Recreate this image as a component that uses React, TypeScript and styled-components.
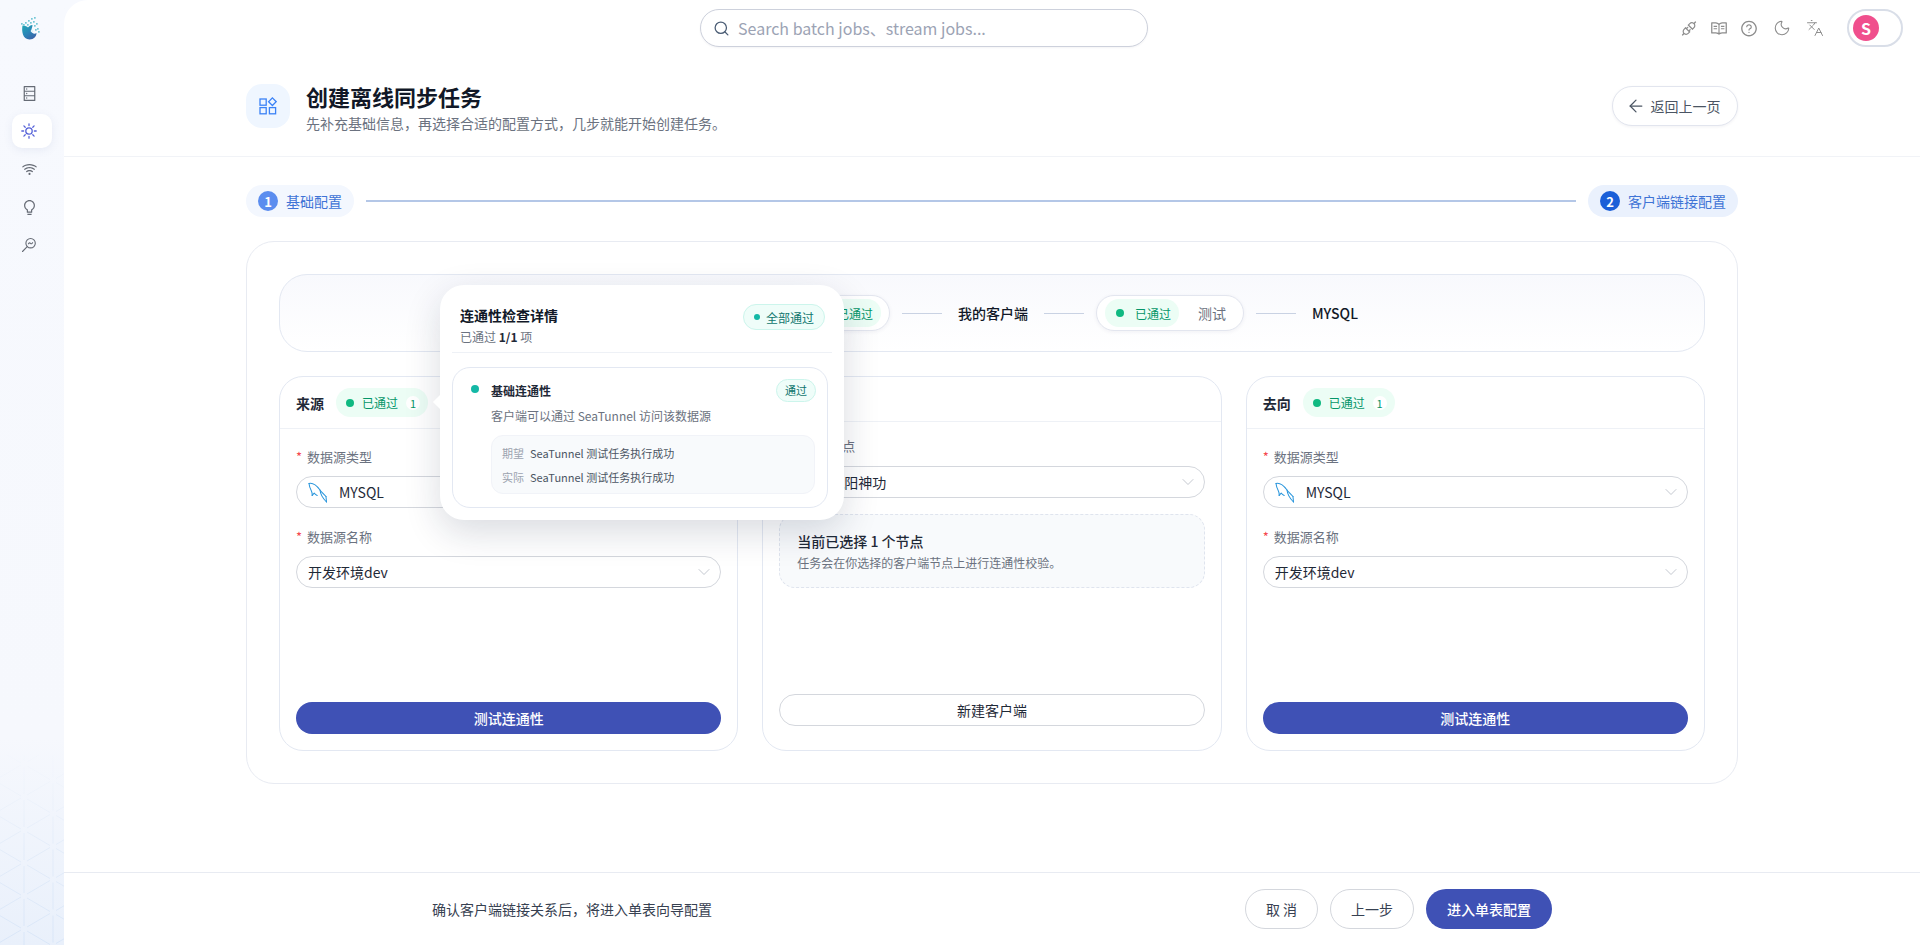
import React from "react";
import styled, { createGlobalStyle } from "styled-components";
import { ArrowLeft, ChevronDown, Languages, Moon, Search } from "lucide-react";
import {
  AiOutlineApi,
  AiOutlineBulb,
  AiOutlineDatabase,
  AiOutlineQuestionCircle,
  AiOutlineRead,
  AiOutlineWifi,
} from "react-icons/ai";

const GlobalStyle = createGlobalStyle`
  html, body { margin: 0; padding: 0; height: 100%; background: #fff; }
  body { font-family: "Noto Sans CJK SC", "Noto Sans", sans-serif; color: #111827; overflow: hidden; }
  #root { height: 100%; }
  * { box-sizing: border-box; }
`;

const Shell = styled.div`
  display: flex;
  height: 945px;
  background: linear-gradient(180deg, #f7f9fe 0%, #f6f8fd 78%, #e9f0fb 100%);
`;

const Sidebar = styled.aside`
  position: relative;
  width: 64px;
  flex: none;
  display: flex;
  flex-direction: column;
  align-items: center;
  overflow: hidden;
`;

const LogoSlot = styled.div`
  height: 74px;
  padding-top: 16px;
  margin-left: -6px;
`;

const NavList = styled.nav`
  position: relative;
  display: flex;
  flex-direction: column;
  gap: 4px;
  margin-top: 2px;
`;

const NavTile = styled.div<{ $active?: boolean }>`
  width: 40px;
  height: 34px;
  display: flex;
  align-items: center;
  justify-content: center;
  padding-right: 6px;
  border-radius: 10px;
  color: ${(p) => (p.$active ? "#5662d8" : "#666b75")};
  background: ${(p) => (p.$active ? "#fff" : "transparent")};
  box-shadow: ${(p) => (p.$active ? "0 2px 8px rgba(90,110,170,.10)" : "none")};
`;

const Lattice = styled.svg`
  position: absolute;
  left: 0;
  bottom: 0;
`;

const Main = styled.main`
  flex: 1;
  min-width: 0;
  display: flex;
  flex-direction: column;
  background: #fff;
  border-top-left-radius: 24px;
`;

const Topbar = styled.header`
  height: 56px;
  flex: none;
  display: flex;
  align-items: center;
  padding: 0 17px 0 636px;
`;

const SearchBox = styled.div`
  width: 448px;
  height: 38px;
  display: flex;
  align-items: center;
  gap: 8px;
  padding: 0 12px;
  border: 1px solid #cdd1dc;
  border-radius: 19px;
  background: #fff;
  box-shadow: 0 1px 2px rgba(30, 40, 80, 0.05);
  color: #4b5d75;
`;

const SearchHint = styled.span`
  font-size: 16px;
  color: #9ca3b4;
`;

const TopIcons = styled.div`
  margin-left: auto;
  display: flex;
  align-items: center;
  gap: 12px;
  color: #8c8c8c;
`;

const TopIcon = styled.span<{ $wide?: boolean }>`
  width: 18px;
  height: 18px;
  margin-left: ${(p) => (p.$wide ? 3 : 0)}px;
  display: flex;
  align-items: center;
  justify-content: center;
`;

const AvatarShell = styled.div`
  width: 56px;
  height: 38px;
  margin-left: 11px;
  padding: 4px;
  border: 2px solid #d9dee8;
  border-radius: 19px;
  background: #fff;
`;

const Avatar = styled.div`
  width: 26px;
  height: 26px;
  border-radius: 50%;
  background: #f04f8d;
  color: #fff;
  font-size: 16px;
  font-weight: 700;
  display: flex;
  align-items: center;
  justify-content: center;
`;

const PageHead = styled.section`
  height: 101px;
  flex: none;
  display: flex;
  align-items: center;
  gap: 16px;
  padding: 0 182px;
  border-bottom: 1px solid #f1f3f7;
`;

const HeadBadge = styled.div`
  width: 44px;
  height: 44px;
  flex: none;
  border-radius: 16px;
  background: #eff6ff;
  color: #3b82f6;
  display: flex;
  align-items: center;
  justify-content: center;
`;

const HeadText = styled.div`
  flex: 1;
  display: flex;
  flex-direction: column;
  gap: 1px;
`;

const PageTitle = styled.h1`
  margin: 0;
  font-size: 22px;
  line-height: 32px;
  font-weight: 700;
  color: #111827;
`;

const PageSub = styled.p`
  margin: 0;
  font-size: 14px;
  line-height: 20px;
  color: #6b7280;
`;

const BackButton = styled.button`
  width: 126px;
  height: 40px;
  display: flex;
  align-items: center;
  justify-content: center;
  gap: 5px;
  padding: 0 4px 0 0;
  border: 1px solid #e2e5ee;
  border-radius: 20px;
  background: #fff;
  box-shadow: 0 1px 3px rgba(30, 40, 80, 0.06);
  color: #4b5563;
  font: inherit;
  font-size: 14px;
`;

const Content = styled.div`
  flex: 1;
  min-height: 0;
  padding: 28px 182px 0;
`;

const Steps = styled.div`
  display: flex;
  align-items: center;
  gap: 12px;
  height: 32px;
`;

const StepPill = styled.div<{ $current?: boolean }>`
  height: 32px;
  display: flex;
  align-items: center;
  gap: 8px;
  padding: 0 12px;
  border-radius: 16px;
  background: ${(p) => (p.$current ? "#eaf1fd" : "#f3f7fe")};
  color: #3f74d6;
  font-size: 14px;
`;

const StepNumber = styled.span<{ $current?: boolean }>`
  width: 20px;
  height: 20px;
  border-radius: 50%;
  background: ${(p) => (p.$current ? "#1a5fd8" : "#5b8def")};
  color: #fff;
  font-size: 13px;
  font-weight: 700;
  display: flex;
  align-items: center;
  justify-content: center;
`;

const StepLine = styled.div`
  flex: 1;
  height: 2px;
  background: #b4c7e7;
`;

const Card = styled.section`
  margin-top: 24px;
  padding: 32px;
  border: 1px solid #e8ebf2;
  border-radius: 28px;
  background: #fff;
`;

const Banner = styled.div`
  height: 78px;
  display: flex;
  align-items: center;
  justify-content: center;
  gap: 12px;
  padding-left: 2px;
  border: 1px solid #e3e8f2;
  border-radius: 28px;
  background: linear-gradient(180deg, #f8f9fd 0%, #ffffff 100%);
`;

const BannerNode = styled.span`
  padding: 0 4px;
  font-size: 14px;
  font-weight: 500;
  color: #111827;
`;

const BannerLine = styled.span`
  width: 40px;
  height: 1px;
  background: #c9d2e3;
`;

const ConnPill = styled.div`
  width: 148px;
  height: 36px;
  display: flex;
  align-items: center;
  justify-content: space-between;
  padding: 0 8px;
  border: 1px solid #e3e6ef;
  border-radius: 18px;
  background: #fff;
  box-shadow: 0 1px 4px rgba(30, 40, 80, 0.06);
`;

const ConnName = styled.span<{ $shift?: boolean }>`
  flex: 1;
  text-align: center;
  padding-left: ${(p) => (p.$shift ? 10 : 0)}px;
  font-size: 14px;
  color: #6b7280;
`;

const ConnPass = styled.span`
  width: 74px;
  height: 28px;
  flex: none;
  display: flex;
  align-items: center;
  gap: 11px;
  padding: 0 0 0 11px;
  border-radius: 14px;
  background: #ecfdf5;
  color: #059669;
  font-size: 12px;
  white-space: nowrap;
`;

const StatusDot = styled.i<{ $size?: number; $color?: string }>`
  width: ${(p) => p.$size ?? 8}px;
  height: ${(p) => p.$size ?? 8}px;
  flex: none;
  border-radius: 50%;
  background: ${(p) => p.$color ?? "#10b981"};
`;

const Panels = styled.div`
  position: relative;
  margin-top: 24px;
  height: 375px;
  display: grid;
  grid-template-columns: repeat(3, 1fr);
  gap: 24px;
`;

const Panel = styled.div`
  display: flex;
  flex-direction: column;
  min-width: 0;
  border: 1px solid #e3e8f2;
  border-radius: 24px;
  background: #fff;
`;

const PanelHead = styled.div<{ $tall?: boolean }>`
  height: ${(p) => (p.$tall ? 52 : 45)}px;
  flex: none;
  display: flex;
  align-items: center;
  gap: 12px;
  padding: 0 16px;
  border-bottom: 1px solid #eef1f6;
`;

const PanelName = styled.span`
  font-size: 14px;
  font-weight: 700;
  color: #1f2937;
`;

const PassBadge = styled.span`
  width: 92px;
  height: 29px;
  display: flex;
  align-items: center;
  padding: 0 0 0 10px;
  border-radius: 15px;
  background: #ecfdf5;
  color: #059669;
  font-size: 12px;
  white-space: nowrap;
`;

const PassText = styled.span`
  margin-left: 8px;
`;

const PassCount = styled.span`
  width: 14px;
  height: 14px;
  margin-left: 8px;
  border-radius: 50%;
  background: #fff;
  font-size: 11px;
  display: flex;
  align-items: center;
  justify-content: center;
`;

const PanelBody = styled.div<{ $compact?: boolean }>`
  flex: 1;
  min-height: 0;
  display: flex;
  flex-direction: column;
  padding: ${(p) => (p.$compact ? "12px 16px 24px" : "16px 16px 16px")};
`;

const FieldLabel = styled.label<{ $spaced?: boolean; $after?: number }>`
  display: flex;
  align-items: center;
  gap: 4px;
  height: 22px;
  margin-top: ${(p) => (p.$spaced ? 17 : 0)}px;
  margin-bottom: ${(p) => p.$after ?? 9}px;
  font-size: 13px;
  color: #6b7280;
`;

const Star = styled.span`
  width: 7px;
  color: #f5484f;
  font-size: 13px;
`;

const SelectBox = styled.div<{ $inset?: number }>`
  height: 32px;
  flex: none;
  display: flex;
  align-items: center;
  padding: 0 6px 0 ${(p) => p.$inset ?? 11}px;
  border: 1px solid #d4d7dd;
  border-radius: 16px;
  background: #fff;
  color: #1f2937;
  font-size: 14px;
`;

const SelectValue = styled.span`
  flex: 1;
`;

const SelectChevron = styled(ChevronDown).attrs({ size: 20, strokeWidth: 1 })`
  color: #b8bdc6;
`;

const DolphinSlot = styled.span`
  display: flex;
  margin-right: 11px;
`;

const Spacer = styled.div`
  flex: 1;
`;

const PrimaryButton = styled.button`
  height: 32px;
  flex: none;
  border: 0;
  border-radius: 16px;
  background: #3f51b5;
  color: #fff;
  font: inherit;
  font-size: 14px;
  font-weight: 500;
`;

const OutlineButton = styled.button`
  height: 32px;
  flex: none;
  border: 1px solid #d4d7dd;
  border-radius: 16px;
  background: #fff;
  color: #1f2937;
  font: inherit;
  font-size: 14px;
`;

const InfoBox = styled.div`
  height: 74px;
  margin-top: 16px;
  padding: 15px 17px;
  border: 1px dashed #dfe4ee;
  border-radius: 16px;
  background: #f8fafc;
`;

const InfoTitle = styled.div`
  font-size: 14px;
  line-height: 22px;
  font-weight: 500;
  color: #1f2937;
`;

const InfoDesc = styled.div`
  margin-top: 1px;
  font-size: 12px;
  line-height: 20px;
  color: #6b7280;
`;

const Popover = styled.div`
  position: absolute;
  left: 161px;
  top: -91px;
  width: 404px;
  height: 235px;
  padding: 12px;
  border-radius: 24px;
  background: #fff;
  box-shadow: 0 12px 36px rgba(20, 30, 60, 0.16);
  z-index: 5;

  &::before {
    content: "";
    position: absolute;
    left: -5px;
    top: 112px;
    width: 10px;
    height: 10px;
    background: #fff;
    transform: rotate(45deg);
  }
`;

const PopHead = styled.div`
  height: 56px;
  display: flex;
  justify-content: space-between;
  padding: 7px 8px 0;
  border-bottom: 1px solid #eef1f6;
`;

const PopTitle = styled.div`
  font-size: 14px;
  line-height: 22px;
  font-weight: 700;
  color: #111827;
`;

const PopSub = styled.div`
  font-size: 12px;
  line-height: 20px;
  margin-top: 1px;
  color: #6b7280;

  & b {
    color: #1f2937;
  }
`;

const AllPass = styled.span`
  height: 26px;
  margin-right: -1px;
  display: flex;
  align-items: center;
  gap: 6px;
  padding: 0 10px;
  border: 1px solid #ccf5ec;
  border-radius: 13px;
  background: #effdf9;
  color: #0f766e;
  font-size: 12px;
`;

const CheckCard = styled.div`
  position: relative;
  margin-top: 14px;
  height: 141px;
  width: 376px;
  padding: 10px 12px 0 38px;
  border: 1px solid #e3e8f2;
  border-radius: 18px;
`;

const CheckDot = styled(StatusDot)`
  position: absolute;
  left: 18px;
  top: 17px;
`;

const CheckTop = styled.div`
  display: flex;
  align-items: center;
  justify-content: space-between;
  height: 24px;
  margin-right: -1px;
`;

const CheckName = styled.span`
  font-size: 12px;
  font-weight: 700;
  color: #1f2937;
`;

const PassTag = styled.span`
  width: 40px;
  height: 23px;
  display: flex;
  align-items: center;
  justify-content: center;
  border: 1px solid #ccf5ec;
  border-radius: 12px;
  background: #effdf9;
  color: #0f766e;
  font-size: 11px;
`;

const CheckDesc = styled.div`
  margin-top: 4px;
  font-size: 12px;
  line-height: 20px;
  color: #6b7280;
`;

const CheckDetail = styled.div`
  margin-top: 9px;
  height: 59px;
  padding: 5px 10px;
  border: 1px solid #f1f3f8;
  border-radius: 12px;
  background: #f8fafc;
`;

const DetailRow = styled.div`
  display: flex;
  gap: 6px;
  height: 24px;
  align-items: center;
  font-size: 11px;
  color: #4b5563;
`;

const DetailKey = styled.span`
  color: #9ca3af;
`;

const Footer = styled.footer`
  height: 73px;
  flex: none;
  display: flex;
  align-items: center;
  justify-content: space-between;
  padding: 0 368px;
  border-top: 1px solid #e8ebf2;
`;

const FooterNote = styled.span`
  font-size: 14px;
  color: #374151;
`;

const FooterActions = styled.div`
  display: flex;
  gap: 12px;
`;

const FooterButton = styled.button<{ $w: number; $primary?: boolean }>`
  width: ${(p) => p.$w}px;
  height: 40px;
  padding: 0;
  border: ${(p) => (p.$primary ? "0" : "1px solid #d4d7dd")};
  border-radius: 20px;
  background: ${(p) => (p.$primary ? "#3f51b5" : "#fff")};
  color: ${(p) => (p.$primary ? "#fff" : "#374151")};
  font: inherit;
  font-size: 14px;
  font-weight: ${(p) => (p.$primary ? 500 : 400)};
`;

const Logo = () => (
  <svg width="22" height="24" viewBox="0 0 22 24">
    <defs>
      <linearGradient id="lg" x1="0" y1="0" x2="0.7" y2="1">
        <stop offset="0" stopColor="#1fa8b4" />
        <stop offset="0.55" stopColor="#2a86b8" />
        <stop offset="1" stopColor="#3a63a8" />
      </linearGradient>
    </defs>
    <path d="M4.5 9.5C3.5 15 4.5 23.5 11.5 23.5c4.5 0 7-3 7-6.5-2 1.5-4.5.5-5-1.5-.5-2.5 1-4 1-6.5-2.5 0-3.5 1.5-4.5 2.5-1-1-2.5-2-5.500-2z" fill="url(#lg)" />
    <circle cx="14" cy="15" r="1.3" fill="#dff1f8" />
    {[[3,7],[5,8],[7,6],[9,8],[10,4],[12,6],[13,2],[15,5],[16,1],[16,9],[18,7],[19,12],[17,13],[20,15]].map(([x,y]) => (
      <rect key={`${x}-${y}`} x={x} y={y} width="1.7" height="1.7" fill="#74c8d6" />
    ))}
  </svg>
);

const SunDots = () => (
  <svg width="16" height="16" viewBox="0 0 16 16" fill="none" stroke="currentColor" strokeWidth="1.3" strokeLinecap="round">
    <circle cx="8" cy="8" r="3.2" />
    <path d="M8 .8v1.800M8 13.400v1.800M.8 8h1.800M13.400 8h1.800M2.900 2.900l1.300 1.300M11.800 11.800l1.300 1.300M2.900 13.100l1.300-1.300M11.800 4.200l1.300-1.300" />
  </svg>
);

const ProbeIcon = () => (
  <svg width="16" height="16" viewBox="0 0 16 16" fill="none" stroke="currentColor" strokeWidth="1.1" strokeLinecap="round">
    <circle cx="9.6" cy="6.2" r="4.7" />
    <path d="M6.200 9.600 1.500 14.500" />
    <path d="M7.400 6.800c.7-1.200 1.400-1.200 2.100-.5s1.400.6 2.100-.6" />
  </svg>
);

const AppsDiamond = () => (
  <svg width="18" height="18" viewBox="0 0 18 18" fill="none" stroke="currentColor" strokeWidth="1.3">
    <rect x="1" y="2" width="6.2" height="6.2" />
    <rect x="1" y="10.6" width="6.2" height="6.2" />
    <rect x="10.4" y="10.6" width="6.2" height="6.2" />
    <path d="M13.400 .9 17.200 4.700 13.400 8.500 9.600 4.700Z" />
  </svg>
);

const Dolphin = () => (
  <svg width="20" height="21" viewBox="0 0 20 21" fill="none" stroke="#2a96dc" strokeWidth="1.05" strokeLinecap="round" strokeLinejoin="round">
    <path d="M1 1.500C5 .5 9 4 12 8c1.500 2 3.500 4 6 6.500" />
    <path d="M1 1.500c.3 3 1 5 2.400 7.500.6 1.200 1 3 .8 4.500" />
    <path d="M4.200 13.500c.8-1 1.400-2 2-2.400.6 1 1.600 1.800 3 2.400" />
    <path d="M12 8c.3 3 2.500 8 6.500 12" />
    <path d="M18 14.500l.5 5.500" />
  </svg>
);

const LatticePattern = () => {
  const lines = [];
  const w = 29;
  const h = 33;
  for (let r = -1; r < 7; r++) {
    for (let c = -1; c < 3; c++) {
      const x = 24 + c * w;
      const y = r * h + (c % 2 === 0 ? 0 : h / 2) + 9;
      lines.push(
        <path
          key={`${r}-${c}`}
          d={`M${x} ${y + 3}v${h - 6}M${x + 3} ${y + 2}l${w - 6} ${h / 2 - 3}M${x + 3} ${y - 2}l${w - 6} ${-(h / 2 - 3)}`}
        />
      );
    }
  }
  return (
    <Lattice width="64" height="190" viewBox="0 0 64 190" fill="none" stroke="url(#latticeFade)" strokeWidth="1">
      <defs>
        <linearGradient id="latticeFade" gradientUnits="userSpaceOnUse" x1="0" y1="0" x2="0" y2="190">
          <stop offset="0" stopColor="#eef3fb" stopOpacity="0.2" />
          <stop offset="0.5" stopColor="#e3ecf9" />
          <stop offset="1" stopColor="#d9e6f8" />
        </linearGradient>
      </defs>
      {lines}
    </Lattice>
  );
};

const TestPill = ({ leading }: { leading?: boolean }) => (
  <ConnPill>
    {leading && <ConnName>测试</ConnName>}
    <ConnPass>
      <StatusDot />
      已通过
    </ConnPass>
    {!leading && <ConnName $shift>测试</ConnName>}
  </ConnPill>
);

const Pass = () => (
  <PassBadge>
    <StatusDot />
    <PassText>已通过</PassText>
    <PassCount>1</PassCount>
  </PassBadge>
);

const SourcePanel = ({ name }: { name: string }) => (
  <Panel>
    <PanelHead $tall>
      <PanelName>{name}</PanelName>
      <Pass />
    </PanelHead>
    <PanelBody>
      <FieldLabel>
        <Star>*</Star>数据源类型
      </FieldLabel>
      <SelectBox>
        <DolphinSlot>
          <Dolphin />
        </DolphinSlot>
        <SelectValue>MYSQL</SelectValue>
        <SelectChevron />
      </SelectBox>
      <FieldLabel $spaced>
        <Star>*</Star>数据源名称
      </FieldLabel>
      <SelectBox>
        <SelectValue>开发环境dev</SelectValue>
        <SelectChevron />
      </SelectBox>
      <Spacer />
      <PrimaryButton>测试连通性</PrimaryButton>
    </PanelBody>
  </Panel>
);

export default function App() {
  return (
    <>
      <GlobalStyle />
      <Shell>
        <Sidebar>
          <LatticePattern />
          <LogoSlot>
            <Logo />
          </LogoSlot>
          <NavList>
            <NavTile><AiOutlineDatabase size={17} /></NavTile>
            <NavTile $active><SunDots /></NavTile>
            <NavTile><AiOutlineWifi size={17} /></NavTile>
            <NavTile><AiOutlineBulb size={17} /></NavTile>
            <NavTile><ProbeIcon /></NavTile>
          </NavList>
        </Sidebar>
        <Main>
          <Topbar>
            <SearchBox>
              <Search size={17} strokeWidth={1.8} />
              <SearchHint>Search batch jobs、stream jobs...</SearchHint>
            </SearchBox>
            <TopIcons>
              <TopIcon><AiOutlineApi size={19} /></TopIcon>
              <TopIcon><AiOutlineRead size={21} /></TopIcon>
              <TopIcon><AiOutlineQuestionCircle size={21} /></TopIcon>
              <TopIcon $wide><Moon size={18} strokeWidth={1.4} /></TopIcon>
              <TopIcon $wide><Languages size={20} strokeWidth={1.3} /></TopIcon>
              <AvatarShell><Avatar>S</Avatar></AvatarShell>
            </TopIcons>
          </Topbar>
          <PageHead>
            <HeadBadge><AppsDiamond /></HeadBadge>
            <HeadText>
              <PageTitle>创建离线同步任务</PageTitle>
              <PageSub>先补充基础信息，再选择合适的配置方式，几步就能开始创建任务。</PageSub>
            </HeadText>
            <BackButton>
              <ArrowLeft size={20} strokeWidth={1.5} />
              返回上一页
            </BackButton>
          </PageHead>
          <Content>
            <Steps>
              <StepPill><StepNumber>1</StepNumber>基础配置</StepPill>
              <StepLine />
              <StepPill $current><StepNumber $current>2</StepNumber>客户端链接配置</StepPill>
            </Steps>
            <Card>
              <Banner>
                <BannerNode>MYSQL</BannerNode>
                <BannerLine />
                <TestPill leading />
                <BannerLine />
                <BannerNode>我的客户端</BannerNode>
                <BannerLine />
                <TestPill />
                <BannerLine />
                <BannerNode>MYSQL</BannerNode>
              </Banner>
              <Panels>
                <SourcePanel name="来源" />
                <Panel>
                  <PanelHead>
                    <PanelName>客户端</PanelName>
                  </PanelHead>
                  <PanelBody $compact>
                    <FieldLabel $after={10}>
                      <Star>*</Star>客户端节点
                    </FieldLabel>
                    <SelectBox $inset={50}>
                      <SelectValue>九阳神功</SelectValue>
                      <SelectChevron />
                    </SelectBox>
                    <InfoBox>
                      <InfoTitle>当前已选择 1 个节点</InfoTitle>
                      <InfoDesc>任务会在你选择的客户端节点上进行连通性校验。</InfoDesc>
                    </InfoBox>
                    <Spacer />
                    <OutlineButton>新建客户端</OutlineButton>
                  </PanelBody>
                </Panel>
                <SourcePanel name="去向" />
                <Popover>
                  <PopHead>
                    <div>
                      <PopTitle>连通性检查详情</PopTitle>
                      <PopSub>已通过 <b>1/1</b> 项</PopSub>
                    </div>
                    <AllPass>
                      <StatusDot $size={6} $color="#14b8a6" />
                      全部通过
                    </AllPass>
                  </PopHead>
                  <CheckCard>
                    <CheckDot $color="#14b8a6" />
                    <CheckTop>
                      <CheckName>基础连通性</CheckName>
                      <PassTag>通过</PassTag>
                    </CheckTop>
                    <CheckDesc>客户端可以通过 SeaTunnel 访问该数据源</CheckDesc>
                    <CheckDetail>
                      <DetailRow><DetailKey>期望</DetailKey>SeaTunnel 测试任务执行成功</DetailRow>
                      <DetailRow><DetailKey>实际</DetailKey>SeaTunnel 测试任务执行成功</DetailRow>
                    </CheckDetail>
                  </CheckCard>
                </Popover>
              </Panels>
            </Card>
          </Content>
          <Footer>
            <FooterNote>确认客户端链接关系后，将进入单表向导配置</FooterNote>
            <FooterActions>
              <FooterButton $w={73}>取 消</FooterButton>
              <FooterButton $w={84}>上一步</FooterButton>
              <FooterButton $w={126} $primary>进入单表配置</FooterButton>
            </FooterActions>
          </Footer>
        </Main>
      </Shell>
    </>
  );
}
